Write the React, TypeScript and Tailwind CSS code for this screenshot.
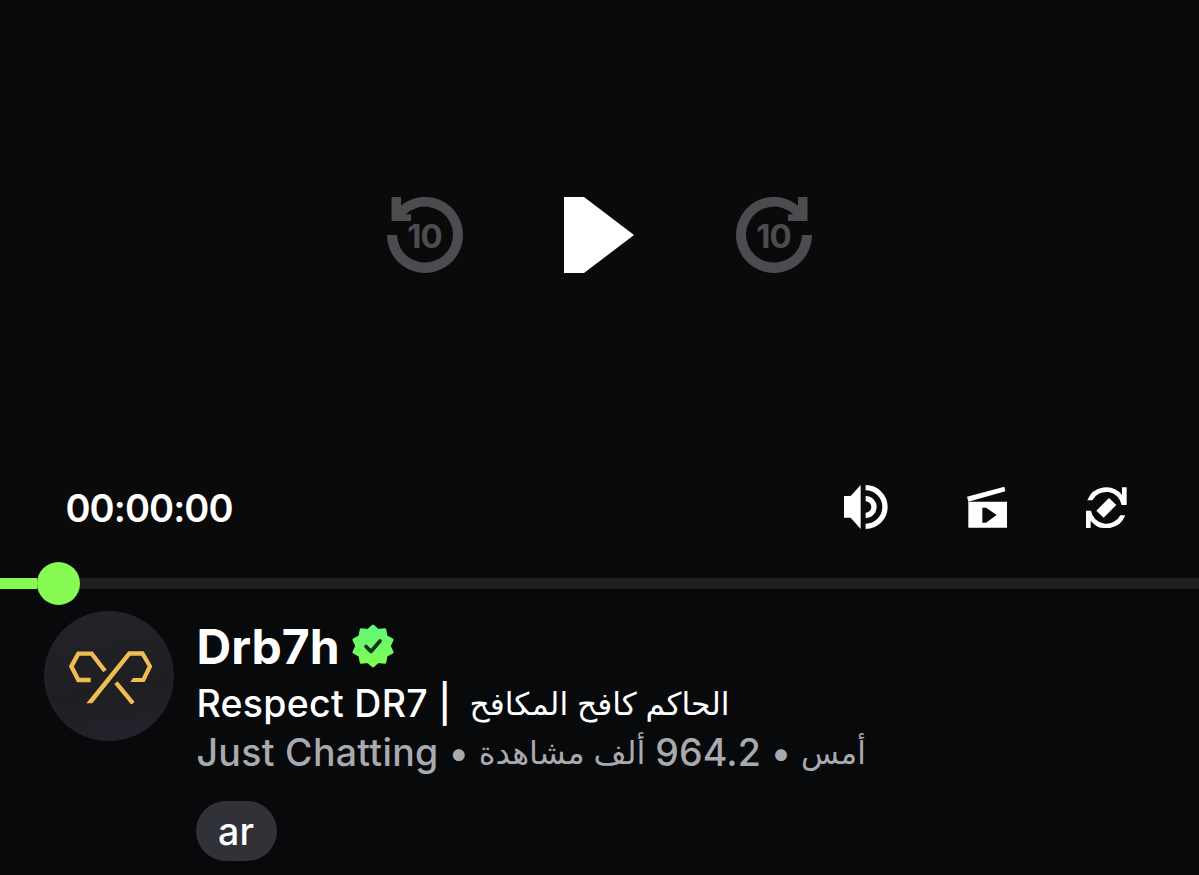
function Seek({ forward }: { forward?: boolean }) {
  return (
    <svg viewBox="0 0 76 76" className="h-[76px] w-[76px] text-[#4b4b50]" fill="currentColor">
      <g transform={forward ? 'translate(76 0) scale(-1 1)' : undefined}>
        <path d="M0 38H10A28 28 0 1 0 18.7 17.3H24V24H4.5V0H14V8.5A38 38 0 1 1 0 38Z" />
      </g>
      <text x="37.5" y="51.3" textAnchor="middle" className="font-['Inter'] text-[33px] font-bold tracking-[-1px]">10</text>
    </svg>
  );
}

function Volume() {
  return (
    <svg viewBox="43 45 133 132" className="h-[44px] w-[44.3px]" fill="none" stroke="#fff" strokeWidth="16">
      <path d="M43 78H63L93 45V177L63 143H43Z" fill="#fff" stroke="none" />
      <path d="M108 53A58 58 0 0 1 108 169M108 86A25 25 0 0 1 108 136" />
    </svg>
  );
}

function Clip() {
  return (
    <svg viewBox="410 46 120 126" className="h-[42px] w-[40px]" fill="#fff">
      <path d="M410 78L522 48L525 62L414 93Z" />
      <path fillRule="evenodd" d="M414 93H530V171H414ZM456 111V156H467L499 133L467 111Z" />
    </svg>
  );
}

function Rotate() {
  const arrow = 'M772 90A60.5 60.5 0 0 1 876 74V51H890V104H875A47 47 0 0 0 787 90Z';
  return (
    <svg viewBox="768 50 123 125" className="h-[41.67px] w-[41px]" fill="#fff">
      <path d={arrow} />
      <path transform="rotate(180 829 112.5)" d={arrow} />
      <path d="M799 121L837 83L859 104L821 142Z" />
    </svg>
  );
}

function Logo() {
  return (
    <svg viewBox="117 152 250 158" className="h-[52.7px] w-[83.3px]" fill="none" stroke="#efbd50" strokeWidth="13">
      <path d="M182 239H145L124 198L145 160H185L225 212" />
      <path d="M169 309H187L301 166H334L353 198L336 233H309L301 245H344L367 198L341 153H295Z" fill="#efbd50" stroke="none" />
      <path d="M258 247L309 309" />
    </svg>
  );
}

function Verified() {
  const points = Array.from({ length: 20 }, (_, i) => {
    const r = i % 2 ? 16.2 : 20;
    const a = (i * Math.PI) / 10;
    return `${22 + r * Math.sin(a)},${22 - r * Math.cos(a)}`;
  }).join(' ');
  return (
    <svg viewBox="0 0 44 44" className="h-[44px] w-[44px]">
      <defs>
        <linearGradient id="badge" x1="0" y1="0" x2="0" y2="1">
          <stop stopColor="#62f778" />
          <stop offset="1" stopColor="#7dff52" />
        </linearGradient>
      </defs>
      <polygon points={points} fill="url(#badge)" stroke="url(#badge)" strokeWidth="3" strokeLinejoin="round" />
      <path d="M15 22.5L20 27.5L29 17" fill="none" stroke="#14301c" strokeWidth="3.8" strokeLinecap="round" strokeLinejoin="round" />
    </svg>
  );
}

export default function App() {
  return (
    <main className="flex h-[875px] w-[1199px] flex-col overflow-hidden bg-[#08090b] font-['Inter','DejaVu_Sans',sans-serif] text-white">
      <section className="flex h-[578px] flex-col bg-[#0a0a0a]">
        <div className="flex h-[470px] items-center justify-between px-[387px]">
          <Seek />
          <svg viewBox="0 0 70 76" className="mr-[1px] h-[76px] w-[70px]" fill="#fff">
            <path d="M0 0H20L70 38L20 76H0Z" />
          </svg>
          <Seek forward />
        </div>
        <div className="flex h-[73px] items-center pr-[72px] pl-[65.5px]">
          <span className="flex-1 pt-[4px] text-[38px] font-semibold tracking-[-0.95px]">00:00:00</span>
          <div className="flex items-center">
            <Volume />
            <div className="ml-[78px]"><Clip /></div>
            <div className="ml-[79.5px] pt-[2px]"><Rotate /></div>
          </div>
        </div>
      </section>
      <div className="flex h-[11px] shrink-0 items-center bg-[#1e1f21]">
        <div className="h-[11px] w-[37px] bg-[#87fb54]" />
        <div className="z-10 -ml-[0.5px] size-[43.5px] shrink-0 rounded-full bg-[#87fb54]" />
      </div>
      <section className="flex pt-[22px] pl-[44px]">
        <div className="flex size-[130px] shrink-0 items-center justify-center rounded-full bg-[linear-gradient(170deg,#242327,#1f1e22_60%,#24232d)] pt-[3px] pl-[3px]">
          <Logo />
        </div>
        <div className="ml-[22.5px] flex flex-col items-start whitespace-nowrap">
          <div className="flex h-[72px] items-center">
            <h1 className="text-[48px] font-bold">Drb7h</h1>
            <div className="ml-[11.5px] pb-[2px]"><Verified /></div>
          </div>
          <div className="flex h-[44px] items-center pb-[1px] text-[37.5px] font-medium">
            <span className="tracking-[0.28px]">Respect DR7 |</span>
            <span dir="rtl" className="ml-[18px] text-[31.4px] font-normal">الحاكم كافح المكافح</span>
          </div>
          <div className="flex h-[50px] items-center pt-[2px] text-[37.5px] font-medium text-[#a9aaae]">
            <span className="tracking-[0.3px]">Just Chatting •</span>
            <span dir="rtl" className="ml-[9.5px] text-[32px] font-normal">ألف مشاهدة</span>
            <span className="ml-[10px] tracking-[0.1px]">964.2 •</span>
            <span dir="rtl" className="ml-[10px] text-[31px] font-normal">أمس</span>
          </div>
          <div className="mt-[24px] -ml-[0.5px] flex h-[60px] w-[81px] items-center justify-center rounded-full bg-[#313238] pt-[3px] pr-[1px] text-[37.5px] font-medium">ar</div>
        </div>
      </section>
    </main>
  );
}
